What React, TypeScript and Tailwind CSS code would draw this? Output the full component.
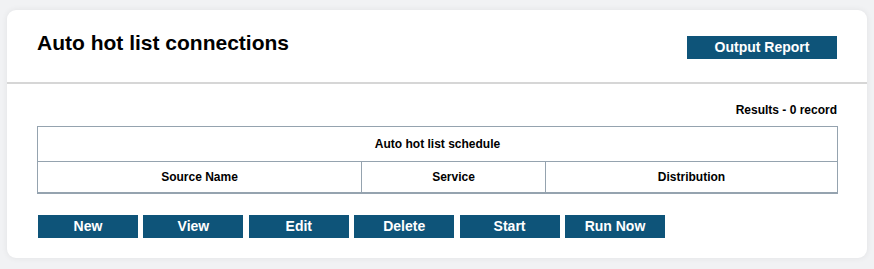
const ACTIONS = ['New', 'View', 'Edit', 'Delete', 'Start', 'Run Now']

export default function App() {
    return (
        <div
            className="min-h-screen bg-[#f1f2f4] pt-[10px] px-[7px] pb-[11px]"
            style={{ fontFamily: '"Liberation Sans", Arial, sans-serif' }}
        >
            <div className="w-[860px] bg-white rounded-[9px] shadow-[0_0_6px_rgba(0,0,0,0.07)]">
                <div className="flex items-start justify-between h-[74px] px-[30px] pt-[21px] border-b-2 border-[#d6d6d6]">
                    <h1 className="text-[21px] leading-[24px] font-bold text-black">
                        Auto hot list connections
                    </h1>
                    <button className="mt-[5px] w-[150px] h-[23px] bg-[#0e5479] text-white text-[14px] font-bold leading-[23px]">
                        Output Report
                    </button>
                </div>

                <div className="px-[30px] pt-[19px] pb-[20px]">
                    <div className="text-right text-[12px] leading-[14px] font-bold text-black mb-[9px]">
                        Results - 0 record
                    </div>

                    <table className="w-[800px] table-fixed border-collapse border border-b-2 border-[#95a3af] text-[12px] font-bold text-black">
                        <colgroup>
                            <col className="w-[324px]" />
                            <col className="w-[184px]" />
                            <col className="w-[292px]" />
                        </colgroup>
                        <thead>
                            <tr>
                                <th colSpan={3} className="h-[35px] border border-[#95a3af] text-center font-bold">
                                    Auto hot list schedule
                                </th>
                            </tr>
                            <tr>
                                <th className="h-[31px] border border-[#95a3af] font-bold">Source Name</th>
                                <th className="h-[31px] border border-[#95a3af] font-bold">Service</th>
                                <th className="h-[31px] border border-[#95a3af] font-bold">Distribution</th>
                            </tr>
                        </thead>
                    </table>

                    <div className="flex gap-[5.4px] mt-[21px] ml-[1px]">
                        {ACTIONS.map((label) => (
                            <button
                                key={label}
                                className="w-[100px] h-[23px] bg-[#0e5479] text-white text-[14px] font-bold leading-[23px]"
                            >
                                {label}
                            </button>
                        ))}
                    </div>
                </div>
            </div>
        </div>
    )
}
